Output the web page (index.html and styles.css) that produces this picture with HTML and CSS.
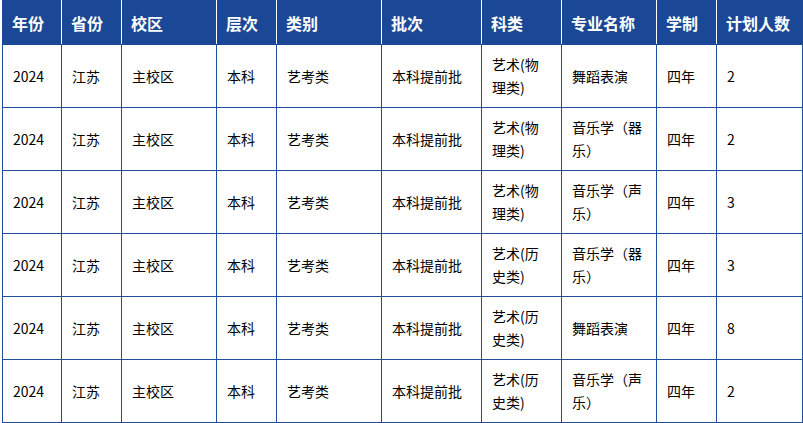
FILE: index.html
```html
<!DOCTYPE html>
<html lang="zh">
<head>
<meta charset="utf-8">
<title>招生计划</title>
<link rel="stylesheet" href="styles.css">
</head>
<body>
<div class="wrap">
<table class="plan">
<colgroup>
<col class="c1"><col class="c2"><col class="c3"><col class="c4"><col class="c5"><col class="c6"><col class="c7"><col class="c8"><col class="c9"><col class="c10">
</colgroup>
<thead>
<tr><th>年份</th><th>省份</th><th>校区</th><th>层次</th><th>类别</th><th>批次</th><th>科类</th><th>专业名称</th><th>学制</th><th>计划人数</th></tr>
</thead>
<tbody>
<tr><td>2024</td><td>江苏</td><td>主校区</td><td>本科</td><td>艺考类</td><td>本科提前批</td><td>艺术(物理类)</td><td>舞蹈表演</td><td>四年</td><td>2</td></tr>
<tr><td>2024</td><td>江苏</td><td>主校区</td><td>本科</td><td>艺考类</td><td>本科提前批</td><td>艺术(物理类)</td><td>音乐学（器乐）</td><td>四年</td><td>2</td></tr>
<tr><td>2024</td><td>江苏</td><td>主校区</td><td>本科</td><td>艺考类</td><td>本科提前批</td><td>艺术(物理类)</td><td>音乐学（声乐）</td><td>四年</td><td>3</td></tr>
<tr><td>2024</td><td>江苏</td><td>主校区</td><td>本科</td><td>艺考类</td><td>本科提前批</td><td>艺术(历史类)</td><td>音乐学（器乐）</td><td>四年</td><td>3</td></tr>
<tr><td>2024</td><td>江苏</td><td>主校区</td><td>本科</td><td>艺考类</td><td>本科提前批</td><td>艺术(历史类)</td><td>舞蹈表演</td><td>四年</td><td>8</td></tr>
<tr><td>2024</td><td>江苏</td><td>主校区</td><td>本科</td><td>艺考类</td><td>本科提前批</td><td>艺术(历史类)</td><td>音乐学（声乐）</td><td>四年</td><td>2</td></tr>
</tbody>
</table>
</div>
</body>
</html>
```
FILE: styles.css
```css
html, body {
  margin: 0;
  padding: 0;
  background: #fff;
}
.wrap {
  padding-left: 2px;
}
.plan {
  border-collapse: collapse;
  table-layout: fixed;
  width: 800px;
  font-family: "Noto Sans CJK SC", "Noto Sans", sans-serif;
  color: #000;
}
.c1 { width: 59px; }
.c2 { width: 60px; }
.c3 { width: 95px; }
.c4 { width: 60px; }
.c5 { width: 105px; }
.c6 { width: 100px; }
.c7 { width: 80px; }
.c8 { width: 95px; }
.c9 { width: 60px; }
.c10 { width: 86px; }
.plan th {
  background: #1b4896;
  color: #fff;
  font-size: 16px;
  font-weight: bold;
  text-align: left;
  height: 43px;
  padding: 0 9px;
  border: 1px solid #1b4896;
  border-left-color: #fff;
  border-right-color: #fff;
  line-height: 20px;
}
.plan th:first-child { border-left-color: #1b4896; }
.plan th:last-child { border-right-color: #1b4896; }
.plan td {
  font-size: 14px;
  line-height: 23px;
  height: 62px;
  padding: 0 8px 0 10px;
  border: 1px solid #1f4e9c;
  vertical-align: middle;
  word-break: break-all;
}
.plan td:nth-child(7) {
  padding-right: 18px;
}
```
